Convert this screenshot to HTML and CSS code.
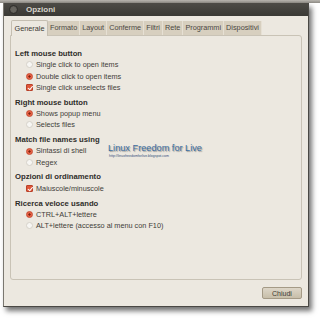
FILE: index.html
```html
<!DOCTYPE html>
<html lang="it">

<head>
    <meta charset="UTF-8">
    <meta name="viewport" content="width=device-width, initial-scale=1.0">
    <title>Opzioni</title>
    <link rel="stylesheet" href="styles.css">
</head>

<body>
    <div class="desk"></div>
    <div class="window">
        <div class="titlebar">
            <span class="close"></span>
            <span class="title">Opzioni</span>
        </div>

        <div class="content">
            <div class="tabs">
                <span class="tab active">Generale</span>
                <span class="tab">Formato</span>
                <span class="tab">Layout</span>
                <span class="tab">Conferme</span>
                <span class="tab">Filtri</span>
                <span class="tab">Rete</span>
                <span class="tab">Programmi</span>
                <span class="tab">Dispositivi</span>
            </div>

            <div class="panel">
                <div class="group">
                    <div class="head">Left mouse button</div>
                    <div class="opt"><span class="radio"></span>Single click to open items</div>
                    <div class="opt"><span class="radio on"></span>Double click to open items</div>
                    <div class="opt"><span class="check on"></span>Single click unselects files</div>
                </div>

                <div class="group">
                    <div class="head">Right mouse button</div>
                    <div class="opt"><span class="radio on"></span>Shows popup menu</div>
                    <div class="opt"><span class="radio"></span>Selects files</div>
                </div>

                <div class="group">
                    <div class="head">Match file names using</div>
                    <div class="opt"><span class="radio on"></span>Sintassi di shell</div>
                    <div class="opt"><span class="radio"></span>Regex</div>
                </div>

                <div class="group">
                    <div class="head">Opzioni di ordinamento</div>
                    <div class="opt"><span class="check on"></span>Maiuscole/minuscole</div>
                </div>

                <div class="group">
                    <div class="head">Ricerca veloce usando</div>
                    <div class="opt"><span class="radio on"></span>CTRL+ALT+lettere</div>
                    <div class="opt"><span class="radio"></span>ALT+lettere (accesso al menu con F10)</div>
                </div>
            </div>

            <div class="actions">
                <button class="btn">Chiudi</button>
            </div>
        </div>

        <!-- blog watermark over the panel -->
        <div class="mark">
            <div class="mark-name">Linux Freedom for Live</div>
            <div class="mark-url">http://linuxfreedomforlive.blogspot.com</div>
        </div>
    </div>
</body>

</html>
```

FILE: styles.css
```css
* {
    margin: 0;
    padding: 0;
    box-sizing: border-box;
}

body {
    font-family: "Liberation Sans", Arial, sans-serif;
    background-color: #ffffff;
    width: 320px;
    height: 320px;
    overflow: hidden;
    position: relative;
}

.desk {
    height: 3px;
    background: linear-gradient(#b9b6b0, #8d8a84);
}

.window {
    position: relative;
    margin-left: 3px;
    width: 306px;
    height: 304px;
    background-color: #ece8e0;
    border-left: 1px solid #7a7770;
    border-right: 1px solid #4a4844;
    border-bottom: 1px solid #4a4844;
    box-shadow: 3px 4px 5px rgba(0, 0, 0, 0.55);
}

.titlebar {
    height: 13px;
    background: linear-gradient(#4d4b46, #3a3935);
    display: flex;
    align-items: center;
    padding-left: 5px;
}

.close {
    width: 9px;
    height: 9px;
    border-radius: 50%;
    background: radial-gradient(#67655f 40%, #4f4d48);
    border: 1px solid #2f2e2b;
}

.title {
    margin-left: 8px;
    font-size: 8px;
    font-weight: bold;
    color: #d8d4cb;
}

.content {
    padding: 4px 6px 0 6px;
}

.tabs {
    display: flex;
    padding-left: 1px;
    height: 15px;
    align-items: flex-end;
}

.tab {
    height: 14px;
    line-height: 14px;
    padding: 0 2px;
    font-size: 7.3px;
    color: #4b473f;
    background-color: #d7cfbf;
    border-right: 1px solid #e6e0d4;
}

.tab.active {
    height: 16px;
    line-height: 15px;
    padding: 0 2.5px;
    background-color: #ece8e0;
    color: #3c3a35;
    border: 1px solid #c4beb1;
    border-bottom: none;
    border-radius: 2px 2px 0 0;
    margin-bottom: -1px;
    position: relative;
}

.panel {
    height: 245px;
    border: 1px solid #c9c3b6;
    border-radius: 0 3px 3px 3px;
    padding: 12px 4px 0 4px;
}

.group {
    margin-bottom: 3.5px;
}

.head {
    height: 11.3px;
    line-height: 11.3px;
    font-size: 7.7px;
    font-weight: bold;
    color: #2e2d2a;
}

.opt {
    height: 11.3px;
    line-height: 11.3px;
    font-size: 7.3px;
    color: #3f3d39;
    display: flex;
    align-items: center;
    padding-left: 11px;
}

.radio,
.check {
    width: 7px;
    height: 7px;
    margin-right: 3px;
    flex-shrink: 0;
}

.radio {
    border-radius: 50%;
    background: #f7f6f3;
    border: 1px solid #d6d2ca;
}

.radio.on {
    border-color: #c8452c;
    background: radial-gradient(#7a2010 25%, #e2583b 35%, #ec7c60);
}

.check {
    border-radius: 1px;
    border: 1px solid #b9422a;
    background: #df573a;
    position: relative;
}

.check.on::after {
    content: "";
    position: absolute;
    left: 1.5px;
    top: 0;
    width: 2px;
    height: 3.5px;
    border: solid #ffffff;
    border-width: 0 1px 1px 0;
    transform: rotate(40deg);
}

.actions {
    display: flex;
    justify-content: flex-end;
    padding-top: 7px;
}

.btn {
    width: 40px;
    height: 12px;
    font-family: "Liberation Sans", Arial, sans-serif;
    font-size: 7px;
    color: #3a3833;
    background: linear-gradient(#ddd6c8, #c7bea9);
    border: 1px solid #a49a86;
    border-radius: 2px;
}

.mark {
    position: absolute;
    left: 104px;
    top: 140px;
}

.mark-name {
    font-size: 9.2px;
    color: #3c6d9f;
    text-shadow: 1px 1px 1px rgba(0, 0, 0, 0.35);
    line-height: 11px;
}

.mark-url {
    font-size: 3.5px;
    color: #34507a;
    margin-left: 1px;
    line-height: 5px;
}
```
